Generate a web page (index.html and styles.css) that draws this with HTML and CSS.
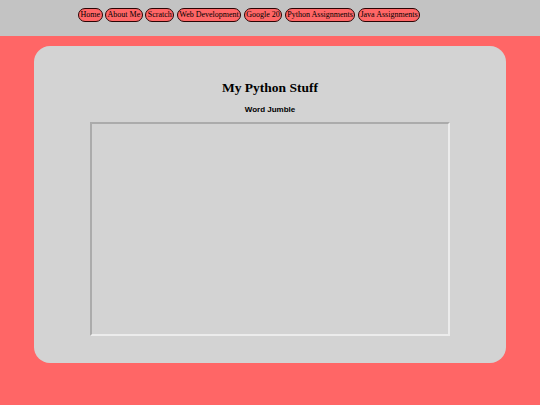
FILE: index.html
```html
<!DOCTYPE html>
<html lang="en">
<head>
	<meta charset="UTF-8">
	<title>My Python Stuff</title>
	<link rel="stylesheet" href="styles.css">
</head>
<body>
	<!-- top navigation -->
	<div class="topbar">
		<ul class="nav">
			<li><a href="#">Home</a></li>
			<li><a href="#">About Me</a></li>
			<li><a href="#">Scratch</a></li>
			<li><a href="#">Web Development</a></li>
			<li><a href="#">Google 20</a></li>
			<li><a href="#">Python Assignments</a></li>
			<li><a href="#">Java Assignments</a></li>
		</ul>
	</div>

	<!-- main content -->
	<div class="card">
		<h1 class="title">My Python Stuff</h1>
		<h3 class="sub">Word Jumble</h3>
		<div class="frame"></div>
	</div>
</body>
</html>
```

FILE: styles.css
```css
body{margin: 0;background: #ff6666;font-family: "Liberation Serif", serif;}

.topbar{background: #c3c3c3;height: 36px;padding-left: 78px;box-sizing: border-box;display: flex;align-items: center;}
.nav{list-style: none;margin: 0;padding: 0;display: flex;gap: 2.5px;margin-top: -6px;}
.nav a{display: block;background: #ff6666;color: #000;text-decoration: none;font-size: 8px;line-height: 10px;
	padding: 1px 1.5px;border: 1px solid #2a0505;border-radius: 8px;}

.card{background: #d3d3d3;margin: 10px 34px 0;height: 317px;border-radius: 16px;display: flex;flex-direction: column;align-items: center;}
.title{font-size: 13.5px;margin: 34px 0 0;line-height: 16px;}
.sub{font-family: "Liberation Sans", sans-serif;font-size: 8px;margin: 9px 0 0;line-height: 10px;}
.frame{width: 360px;height: 214px;box-sizing: border-box;border: 2px solid;border-color: #ababab #ececec #ececec #ababab;margin-top: 7px;}
```
